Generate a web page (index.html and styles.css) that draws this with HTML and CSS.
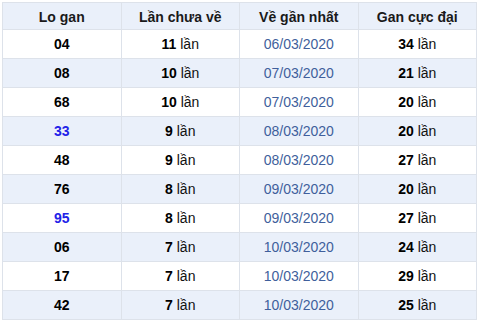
FILE: index.html
```html
<!DOCTYPE html>
<html lang="vi">
  <head>
    <meta charset="UTF-8" />
    <meta name="viewport" content="width=device-width, initial-scale=1.0" />
    <title>Lo gan</title>
    <link rel="stylesheet" href="styles.css">
  </head>
  <body>
    <table class="gan-table">
      <thead>
        <tr>
          <th>Lo gan</th>
          <th>Lần chưa về</th>
          <th>Về gần nhất</th>
          <th>Gan cực đại</th>
        </tr>
      </thead>
      <tbody>
        <tr><td class="num">04</td><td><b>11</b> lần</td><td class="date">06/03/2020</td><td><b>34</b> lần</td></tr>
        <tr><td class="num">08</td><td><b>10</b> lần</td><td class="date">07/03/2020</td><td><b>21</b> lần</td></tr>
        <tr><td class="num">68</td><td><b>10</b> lần</td><td class="date">07/03/2020</td><td><b>20</b> lần</td></tr>
        <tr><td class="num hot">33</td><td><b>9</b> lần</td><td class="date">08/03/2020</td><td><b>20</b> lần</td></tr>
        <tr><td class="num">48</td><td><b>9</b> lần</td><td class="date">08/03/2020</td><td><b>27</b> lần</td></tr>
        <tr><td class="num">76</td><td><b>8</b> lần</td><td class="date">09/03/2020</td><td><b>20</b> lần</td></tr>
        <tr><td class="num hot">95</td><td><b>8</b> lần</td><td class="date">09/03/2020</td><td><b>27</b> lần</td></tr>
        <tr><td class="num">06</td><td><b>7</b> lần</td><td class="date">10/03/2020</td><td><b>24</b> lần</td></tr>
        <tr><td class="num">17</td><td><b>7</b> lần</td><td class="date">10/03/2020</td><td><b>29</b> lần</td></tr>
        <tr><td class="num">42</td><td><b>7</b> lần</td><td class="date">10/03/2020</td><td><b>25</b> lần</td></tr>
      </tbody>
    </table>
  </body>
</html>
```

FILE: styles.css
```css
body {
  margin: 0;
  padding: 2px 3px 0 2px;
  background: #ffffff;
  font-family: "Liberation Sans", Arial, sans-serif;
  font-size: 14px;
  color: #111;
}
.gan-table {
  width: 475px;
  border-collapse: collapse;
  border: 1px solid #dde2ea;
  table-layout: fixed;
}
.gan-table th,
.gan-table td {
  border: 1px solid #dde2ea;
  text-align: center;
  padding: 0;
  height: 28px;
}
.gan-table th {
  height: 24px;
  padding-top: 2px;
  background: #eaf0fa;
  font-weight: bold;
  color: #1a1a1a;
}
.gan-table tbody tr:nth-child(even) td {
  background: #eaf0fa;
}
.gan-table b {
  color: #000;
}
.num {
  font-weight: bold;
  color: #000;
}
.num.hot {
  color: #2222e8;
}
.date {
  color: #3f5f9c;
}
```
